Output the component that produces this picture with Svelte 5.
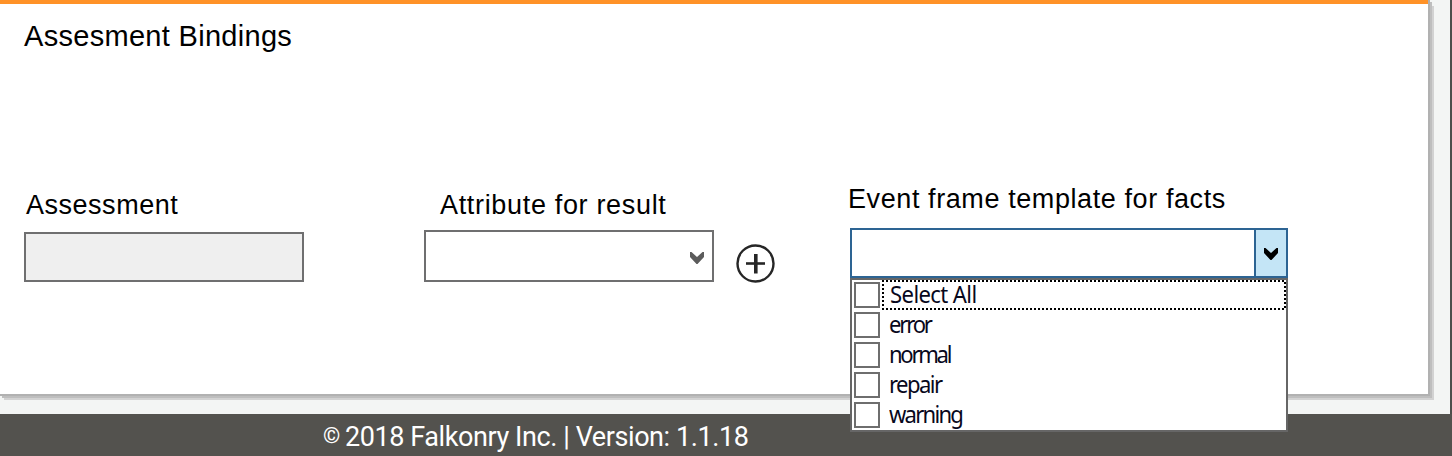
<script>
  const options = ['Select All', 'error', 'normal', 'repair', 'warning'];
</script>

{#snippet chevron()}
  <svg class="chevron" width="14" height="12" viewBox="0 0 14 12">
    <path d="M0 0H1.5L7 5L12.5 0H14V5L7.5 12H6.5L0 5Z" fill="currentColor" />
  </svg>
{/snippet}

<div class="page">
  <section class="panel">
    <h1>Assesment Bindings</h1>
    <div class="fields">
      <div class="field assessment">
        <span class="label l1">Assessment</span>
        <div class="input"></div>
      </div>
      <div class="field attribute">
        <span class="label l2">Attribute for result</span>
        <div class="select">{@render chevron()}</div>
      </div>
      <svg class="add" width="40" height="40" viewBox="0 0 40 40" fill="none" stroke="#262626">
        <circle cx="20.5" cy="19.5" r="18" stroke-width="2.4" />
        <path d="M11 19.5H30" stroke-width="2.6" />
        <path d="M20.8 10V29.5" stroke-width="3.6" />
      </svg>
      <div class="field template">
        <span class="label l3">Event frame template for facts</span>
        <div class="combo">
          <div class="toggle">{@render chevron()}</div>
          <ul>
            {#each options as option, i}
              <li class:focused={i === 0}>
                <i class="check"></i>
                <span class="option"><span class="name o{i}">{option}</span></span>
              </li>
            {/each}
          </ul>
        </div>
      </div>
    </div>
  </section>
  <footer><span class="mark">©</span><span>2018 Falkonry Inc. | Version: 1.1.18</span></footer>
</div>

<style>
  .page {
    box-sizing: border-box;
    width: 1452px;
    height: 456px;
    overflow: hidden;
    background: linear-gradient(#4e4e4b, #4e4e4b) right / 2px 100% no-repeat #f3f5f4;
    font-family: "Liberation Sans", Arial, sans-serif;
    color: #000;
  }
  .panel {
    box-sizing: border-box;
    width: 1428px;
    height: 394px;
    border-top: 4px solid #ff9227;
    background: #fff;
    box-shadow: 0 2px #b1b1b1, 2px 0 #b1b1b1, 2px 2px #b1b1b1, 2px 4px #bebebe, 4px 2px #bebebe, 4px 4px #bebebe, 4px 6px #d2d2d2, 6px 6px #d2d2d2;
  }
  h1 {
    margin: 0;
    padding: 15px 0 0 24px;
    height: 159px;
    font-size: 29px;
    font-weight: 400;
    line-height: 34px;
    letter-spacing: 0.3px;
    white-space: nowrap;
  }
  .fields {
    display: flex;
    align-items: flex-start;
    padding-left: 24px;
  }
  .field {
    display: flex;
    flex-direction: column;
    flex: none;
  }
  .label {
    font-size: 27px;
    line-height: 32px;
    white-space: nowrap;
  }
  .assessment {
    width: 280px;
    margin-top: 11px;
    gap: 11px;
  }
  .attribute {
    width: 290px;
    margin: 11px 0 0 120px;
    gap: 9px;
  }
  .l1 {
    padding-left: 2px;
    letter-spacing: 0.52px;
  }
  .l2 {
    padding-left: 16px;
    letter-spacing: 0.67px;
  }
  .input,
  .select {
    box-sizing: border-box;
    height: 50px;
    border: 2px solid #6f6f70;
    background: #efefef;
  }
  .select {
    display: flex;
    align-items: center;
    justify-content: flex-end;
    height: 52px;
    padding: 4px 8px 0 0;
    background: #fff;
    color: #5c5c5c;
  }
  .add {
    flex: none;
    margin: 66px 0 0 21px;
  }
  .template {
    width: 438px;
    margin: 5px 0 0 75px;
    gap: 13px;
  }
  .l3 {
    margin-left: -2px;
    letter-spacing: 0.59px;
  }
  .combo {
    position: relative;
    box-sizing: border-box;
    display: flex;
    justify-content: flex-end;
    height: 50px;
    border: 2px solid #2d6493;
    background: #fff;
  }
  .toggle {
    box-sizing: border-box;
    display: flex;
    align-items: center;
    justify-content: center;
    width: 32px;
    padding-top: 2px;
    border-left: 2px solid #2d6493;
    background: #c4e5f6;
  }
  ul {
    position: absolute;
    top: 48px;
    left: -2px;
    box-sizing: border-box;
    width: 438px;
    height: 154px;
    margin: 0;
    padding: 0;
    list-style: none;
    border: 2px solid #666;
    background: #fff;
  }
  li {
    display: flex;
    align-items: flex-start;
    height: 30px;
  }
  .check {
    box-sizing: border-box;
    flex: none;
    width: 26px;
    height: 26px;
    margin: 2px 2px 0;
    border: 2px solid #6e6e6e;
  }
  .option {
    box-sizing: border-box;
    flex: 1;
    height: 30px;
    padding-left: 7px;
    font: 24px/27px "Noto Sans", "Open Sans", sans-serif;
    white-space: nowrap;
    color: #08081c;
  }
  .name {
    display: inline-block;
    transform: scaleX(0.92);
    transform-origin: left;
  }
  .o0 {
    letter-spacing: -0.65px;
  }
  .o1 {
    letter-spacing: -2.4px;
  }
  .o2 {
    letter-spacing: -2.5px;
  }
  .o3 {
    letter-spacing: -1.7px;
  }
  .o4 {
    letter-spacing: -1.9px;
  }
  .focused .option {
    padding-left: 8px;
    background:
      repeating-linear-gradient(90deg, #000 0 2px, #fff 2px 4px) top / 100% 2px no-repeat,
      repeating-linear-gradient(90deg, #000 0 2px, #fff 2px 4px) bottom / 100% 2px no-repeat,
      repeating-linear-gradient(#000 0 2px, #fff 2px 4px) left / 2px 100% no-repeat,
      repeating-linear-gradient(#fff 0 2px, #000 2px 4px) right / 2px 100% no-repeat;
  }
  footer {
    display: flex;
    box-sizing: border-box;
    width: 1452px;
    height: 42px;
    margin-top: 20px;
    padding: 7px 0 0 323px;
    background: #53524e;
    color: #fff;
    font: 27px/32px Roboto, sans-serif;
    letter-spacing: -0.42px;
    white-space: nowrap;
  }
  .mark {
    width: 22px;
    font-size: 22px;
    line-height: 30px;
  }
</style>
